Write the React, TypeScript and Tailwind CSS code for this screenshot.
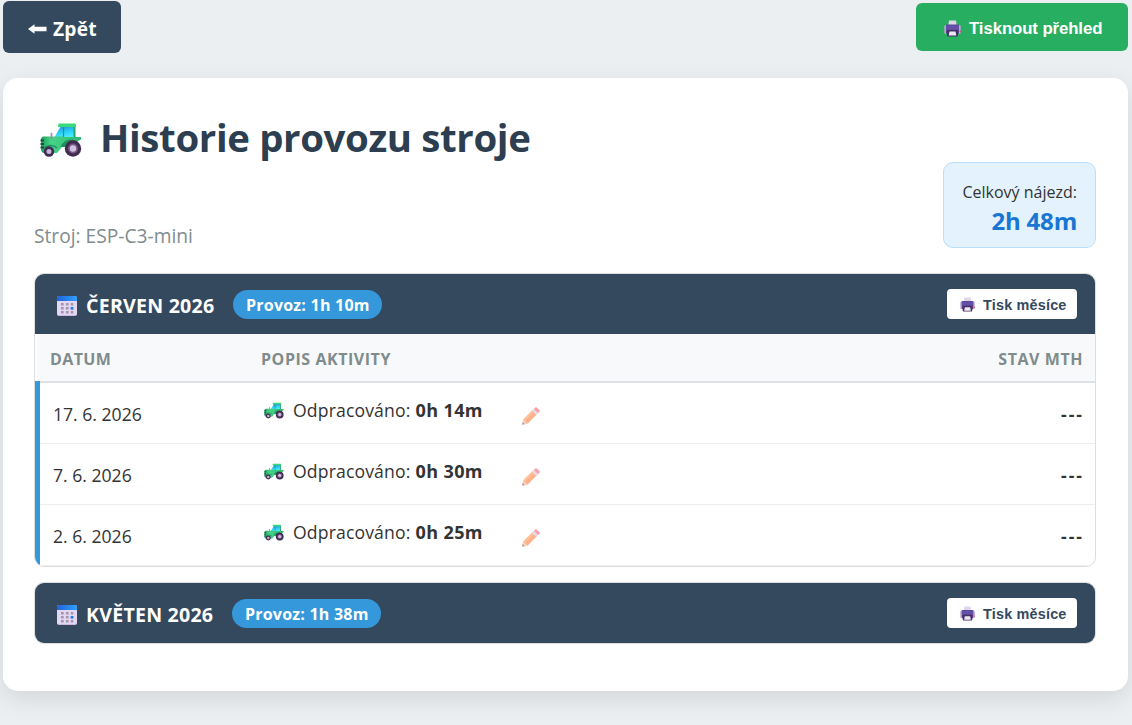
import React from 'react';

interface Entry {
  date: string;
  worked: string;
  mth: string;
}

interface Month {
  name: string;
  total: string;
  entries: Entry[];
}

const months: Month[] = [
  {
    name: 'ČERVEN 2026',
    total: '1h 10m',
    entries: [
      { date: '17. 6. 2026', worked: '0h 14m', mth: '---' },
      { date: '7. 6. 2026', worked: '0h 30m', mth: '---' },
      { date: '2. 6. 2026', worked: '0h 25m', mth: '---' },
    ],
  },
  { name: 'KVĚTEN 2026', total: '1h 38m', entries: [] },
];

const TractorIcon: React.FC<{ className?: string }> = ({ className }) => (
  <svg viewBox="0 0 42 34" className={className}>
    <defs>
      <linearGradient id="glass" x1="0" y1="0" x2="0.3" y2="1">
        <stop offset="0" stopColor="#2f7fd0" />
        <stop offset="0.5" stopColor="#26c8f5" />
        <stop offset="1" stopColor="#4df0ff" />
      </linearGradient>
      <linearGradient id="body" x1="0" y1="0" x2="1" y2="0">
        <stop offset="0" stopColor="#1e9c5a" />
        <stop offset="0.25" stopColor="#46d487" />
        <stop offset="1" stopColor="#2fb873" />
      </linearGradient>
    </defs>
    <path d="M14 15 21 3h13v13H14z" fill="url(#glass)" />
    <path d="M23.500 3v12" stroke="#1b9a74" strokeWidth="1.200" />
    <path d="M33.500 2h2v14h-2z" fill="#27a567" />
    <path d="M18 3c0-2 1-2.500 2.500-2.500H34c1.500 0 2 .6 2 2V4H18z" fill="#38d977" />
    <path d="M3.500 13.500h20V14H41v2.500l-3 1.500-3 6H22l-5 6H4c-2 0-3-2-3-4v-8c0-2.500.5-4.500 2.500-4.500z" fill="url(#body)" />
    <path d="M23 20c3-4 10-5 14-1v5H21c0-2 .8-3 2-4z" fill="#21915d" />
    <path d="M4 26c2-4 9-5 13-1" fill="none" stroke="#21915d" strokeWidth="1.600" />
    <path d="M.5 17.500h3.500M.5 21h3.500M.5 24.500h3.500" stroke="#17513d" strokeWidth="1.800" />
    <path d="M11.500 10.500v5.500" stroke="#9d86a8" strokeWidth="1.600" strokeLinecap="round" />
    <circle cx="33" cy="25.500" r="8.200" fill="#402c52" />
    <circle cx="33" cy="25.500" r="5" fill="#705b7e" />
    <circle cx="33" cy="25.500" r="3.200" fill="#d3bfe2" />
    <circle cx="9" cy="28.500" r="5.200" fill="#402c52" />
    <circle cx="9" cy="28.500" r="2.500" fill="#c9b3d8" />
  </svg>
);

const PrinterIcon: React.FC<{ className?: string }> = ({ className }) => (
  <svg viewBox="0 0 17 17" className={className}>
    <path d="M5 .5h7l.7 5H4.300z" fill="#e0d5ea" />
    <path d="M1.500 5.500 3 4.500h11l1.500 1V13.500h-14z" fill="#5a4594" />
    <path d="M.3 6.500c0-1 .7-1.500 1.700-1.500v9C1 14 .3 13.500.3 12.500zM16.700 6.500c0-1-.7-1.500-1.700-1.500v9c1 0 1.700-.5 1.700-1.500z" fill="#b9a5d0" />
    <path d="M2 5.500h13V9.500H2z" fill="#6450a8" />
    <path d="M3 10h11v5c0 1-.5 1.500-1.500 1.500h-8C3.500 16.500 3 16 3 15z" fill="#453063" />
    <path d="M5.500 11.500h6l.8 4H4.700z" fill="#efe6f5" />
    <path d="M15.800 11.500h1" stroke="#e5395f" strokeWidth="1.300" />
  </svg>
);

const CalendarIcon: React.FC = () => (
  <svg viewBox="0 0 20 20" className="h-5 w-5">
    <defs>
      <linearGradient id="calTop" x1="0" y1="0" x2="1" y2="0">
        <stop offset="0" stopColor="#1f63d8" />
        <stop offset="1" stopColor="#2fa0ff" />
      </linearGradient>
    </defs>
    <rect width="20" height="20" rx="2" fill="#c9aedb" />
    <path d="M0 4h20v13.500c0 1-.8 1.800-2 1.800H2c-1.200 0-2-.8-2-1.800z" fill="#e4d7f1" />
    <path d="M0 5V2C0 .8.800 0 2 0h16c1.200 0 2 .8 2 2v3z" fill="url(#calTop)" />
    <path
      d="M4 8.300h12.300M4 12.300h12.300M4 16.300h12.300"
      stroke="#a295ae"
      strokeWidth="2.600"
      strokeDasharray="2.700 2.200"
    />
    <path d="M13.700 11h2.600v2.600h-2.600z" fill="#1d80e8" />
  </svg>
);

const PencilIcon: React.FC = () => (
  <svg viewBox="0 0 19 19" className="h-[18px] w-[18px] opacity-60">
    <path d="M1.300 13.200 11.500 3l4.500 4.500L5.800 17.700.3 18.700z" fill="#ff7f3e" />
    <path d="M1.300 13.200 11.500 3 13 4.500 3 14.900z" fill="#ff9a5a" />
    <path d="m1.300 13.200 4.500 4.500-5.500 1z" fill="#e9b9a0" />
    <path d="m.8 15.900 1.800 1.800-2.300 1z" fill="#6a5078" />
    <path d="m10.500 4 2-2 4.500 4.500-2 2z" fill="#cfc4e0" />
    <path d="m12.500 2 1.400-1.300c.6-.5 1.200-.5 1.800 0l2.600 2.500c.6.6.6 1.300 0 1.900L17 6.500z" fill="#f8606a" />
  </svg>
);

const ArrowIcon: React.FC = () => (
  <svg viewBox="0 0 19 10" className="h-[10px] w-[19px]">
    <path d="M0 5 6.500.3v2.500H18.500v4.400H6.500v2.500z" fill="#fff" />
  </svg>
);

const MonthHeader: React.FC<{ month: Month }> = ({ month }) => (
  <div className="flex h-[60px] items-center bg-[#34495e] pl-[22px] pr-[18px] text-white">
    <div className="flex flex-1 items-center">
      <span className="mt-1">
        <CalendarIcon />
      </span>
      <span className="ml-[9px] mt-1 whitespace-nowrap text-[19.600px] font-bold tracking-[0.22px]">{month.name}</span>
      <span className="ml-[19px] mt-[2px] flex h-[29px] w-[149px] items-center justify-center whitespace-nowrap rounded-full bg-[#3498db] pt-px text-base font-bold tracking-[0.22px]">
        Provoz: {month.total}
      </span>
    </div>
    <button className="flex h-[30px] w-[130px] items-center rounded bg-white pl-[13px] font-['Liberation_Sans',sans-serif] text-[14.400px] font-bold text-[#34495e]">
      <PrinterIcon className="mt-px h-[15px] w-[15px]" />
      <span className="ml-2 whitespace-nowrap pt-[3px] tracking-[0.2px]">Tisk měsíce</span>
    </button>
  </div>
);

const EntryRow: React.FC<{ entry: Entry }> = ({ entry }) => (
  <div className="flex h-[61px] items-center border-b border-[#eeeeee] pl-[13px] pr-[13px] pt-[2px]">
    <span className="w-[211px] whitespace-nowrap text-[17.600px]">{entry.date}</span>
    <div className="mb-2 flex flex-1 items-center">
      <TractorIcon className="h-[17px] w-5" />
      <div className="ml-[9px] flex w-[229px] items-baseline gap-[5px] whitespace-nowrap text-[17.600px]">
        <span className="tracking-[0.14px]">Odpracováno:</span>
        <b className="text-[18px] tracking-[0.4px]">{entry.worked}</b>
      </div>
      <span className="mt-3">
        <PencilIcon />
      </span>
    </div>
    <span className="-mr-[2px] text-[17.600px] font-bold tracking-[2px]">{entry.mth}</span>
  </div>
);

const App: React.FC = () => {
  return (
    <div className="h-[725px] overflow-hidden bg-[#ebeff2] px-[3px] pt-px font-['Open_Sans','Noto_Sans',sans-serif] text-[#333333]">
      <div className="flex h-[77px] items-start justify-between pr-px">
        <button className="flex h-[52px] w-[118px] items-center rounded-md bg-[#34495e] pl-[25px] pt-1 text-white">
          <ArrowIcon />
          <span className="ml-[6px] text-[19.200px] font-bold tracking-[0.2px]">Zpět</span>
        </button>
        <button className="mt-[2px] flex h-12 w-[212px] items-center rounded-md bg-[#27ae60] pl-7 pt-[2px] font-['Liberation_Sans',sans-serif] text-white">
          <PrinterIcon className="h-[17px] w-[17px]" />
          <span className="ml-2 mt-[2px] whitespace-nowrap text-[16.800px] font-bold tracking-[-0.1px]">Tisknout přehled</span>
        </button>
      </div>

      <div className="h-[613px] w-[1125px] rounded-[15px] bg-white px-[31px] pt-[30px] shadow-[0_8px_25px_rgba(0,0,0,0.1)]">
        <div className="flex h-[165px] w-[1062px] items-start justify-between">
          <div>
            <h1 className="flex h-[62px] items-center whitespace-nowrap text-[38.400px] font-bold tracking-[-0.36px] text-[#2c3e50]">
              <TractorIcon className="ml-[6px] mr-[18px] mt-[2px] h-[34px] w-[42px]" />
              <span className="-mt-[3px]">Historie provozu stroje</span>
            </h1>
            <p className="mt-[52px] text-[19.200px] text-[#7f8c8d]">Stroj: ESP-C3-mini</p>
          </div>
          <div className="mt-[54px] flex h-[86px] w-[153px] flex-col items-end rounded-[10px] border border-[#bbdefb] bg-[#e3f2fd] pr-[18px] pt-[15px]">
            <span className="whitespace-nowrap text-base leading-7">Celkový nájezd:</span>
            <span className="whitespace-nowrap text-[24px] font-bold leading-[29px] tracking-[-0.2px] text-[#1976d2]">2h 48m</span>
          </div>
        </div>

        <div className="flex w-[1062px] flex-col gap-[15px]">
          {months.map(month => (
            <div key={month.name} className="overflow-hidden rounded-[10px] border border-[#dddddd]">
              <MonthHeader month={month} />
              {month.entries.length > 0 && (
                <div>
                  <div className="ml-[2px] flex h-[47px] items-center bg-[#f8f9fa] pl-[13px] pr-3 text-base font-bold text-[#7f8c8d]">
                    <span className="w-[211px] pt-[2px] tracking-[0.4px]">DATUM</span>
                    <span className="flex-1 pt-[2px] tracking-[0.55px]">POPIS AKTIVITY</span>
                    <span className="pt-[2px] tracking-[0.55px]">STAV MTH</span>
                  </div>
                  <div className="border-l-[5px] border-[#3498db]">
                    <div className="h-[2px] bg-[#dee2e6]" />
                    {month.entries.map(entry => (
                      <EntryRow key={entry.date} entry={entry} />
                    ))}
                  </div>
                </div>
              )}
            </div>
          ))}
        </div>
      </div>
    </div>
  );
};

export default App;
